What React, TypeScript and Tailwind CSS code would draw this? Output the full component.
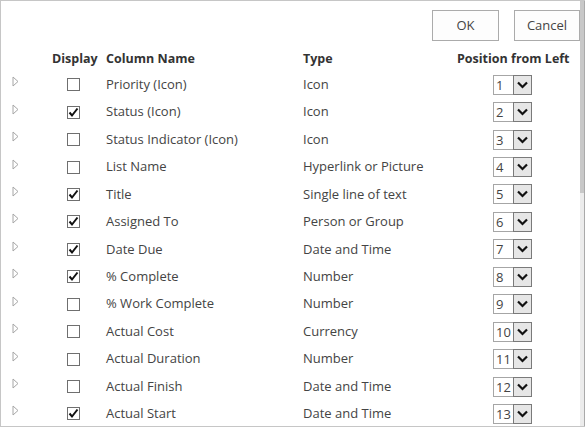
const rows: { name: string; type: string; checked: boolean }[] = [
  { name: "Priority (Icon)", type: "Icon", checked: false },
  { name: "Status (Icon)", type: "Icon", checked: true },
  { name: "Status Indicator (Icon)", type: "Icon", checked: false },
  { name: "List Name", type: "Hyperlink or Picture", checked: false },
  { name: "Title", type: "Single line of text", checked: true },
  { name: "Assigned To", type: "Person or Group", checked: true },
  { name: "Date Due", type: "Date and Time", checked: true },
  { name: "% Complete", type: "Number", checked: true },
  { name: "% Work Complete", type: "Number", checked: false },
  { name: "Actual Cost", type: "Currency", checked: false },
  { name: "Actual Duration", type: "Number", checked: false },
  { name: "Actual Finish", type: "Date and Time", checked: false },
  { name: "Actual Start", type: "Date and Time", checked: true },
];

export default function App() {
  return (
    <div
      className="w-[585px] h-[427px] flex overflow-hidden bg-white border-t border-l border-b border-[#c6c6c6] text-[13px] text-[#444]"
      style={{ fontFamily: '"Open Sans", "Liberation Sans", sans-serif' }}
    >
      <div className="flex-1 flex flex-col overflow-hidden">
        {/* Buttons */}
        <div className="flex justify-end gap-[15px] pt-[9px] h-[47px] shrink-0">
          <button className="w-[67px] h-[31px] border border-[#ababab] bg-[#fdfdfd] text-[#444]">
            OK
          </button>
          <button className="w-[66px] h-[31px] border border-[#ababab] bg-[#fdfdfd] text-[#444]">
            Cancel
          </button>
        </div>

        {/* Header */}
        <div className="grid grid-cols-[51px_54px_197px_154px_1fr] h-[23px] items-center font-bold text-[12.5px] text-[#333] shrink-0">
          <span />
          <span>Display</span>
          <span>Column Name</span>
          <span>Type</span>
          <span className="whitespace-nowrap">Position from Left</span>
        </div>

        {/* Rows */}
        {rows.map((r, i) => (
          <div
            key={r.name}
            className="grid grid-cols-[51px_54px_197px_154px_1fr] h-[27.45px] items-center shrink-0"
          >
            <span className="pl-[11px] -mt-[6px]">
              <Triangle />
            </span>
            <span className="pl-[15px]">
              <Checkbox checked={r.checked} />
            </span>
            <span className="whitespace-nowrap">{r.name}</span>
            <span className="whitespace-nowrap">{r.type}</span>
            <span className="pl-[36px]">
              <Select value={i + 1} />
            </span>
          </div>
        ))}
      </div>

      {/* Scrollbar */}
      <div className="w-[4px] flex flex-col shrink-0 bg-[#ececec]">
        <div className="h-[192px] bg-[#c8c8c8]" />
      </div>
      <div className="w-[1px] bg-[#aaaaaa] shrink-0" />
    </div>
  );
}

function Triangle() {
  return (
    <svg width="7" height="11" viewBox="0 0 7 11" className="block">
      <path d="M1 1 L6 5.5 L1 10 Z" fill="none" stroke="#a6a6a6" strokeWidth="1" />
    </svg>
  );
}

function Checkbox({ checked }: { checked: boolean }) {
  return (
    <div className="w-[13px] h-[13px] border border-[#6f6f6f] bg-white relative">
      {checked && (
        <svg width="11" height="11" viewBox="0 0 11 11" className="absolute left-0 top-0">
          <path d="M1.5 5.5 L4 8.5 L9.5 1.5" fill="none" stroke="#111" strokeWidth="2" />
        </svg>
      )}
    </div>
  );
}

function Select({ value }: { value: number }) {
  return (
    <div className="flex h-[20px] w-[39px]">
      <div className="w-[20px] border border-[#a6a6a6] border-r-0 bg-white pl-[2px] leading-[18px] text-[13px] text-[#444]">
        {value}
      </div>
      <div className="w-[19px] border border-[#7a7a7a] bg-[#e6e6e6] flex items-center justify-center">
        <svg width="11" height="8" viewBox="0 0 11 8">
          <path d="M1 1.5 L5.5 6 L10 1.5" fill="none" stroke="#111" strokeWidth="2.2" />
        </svg>
      </div>
    </div>
  );
}
